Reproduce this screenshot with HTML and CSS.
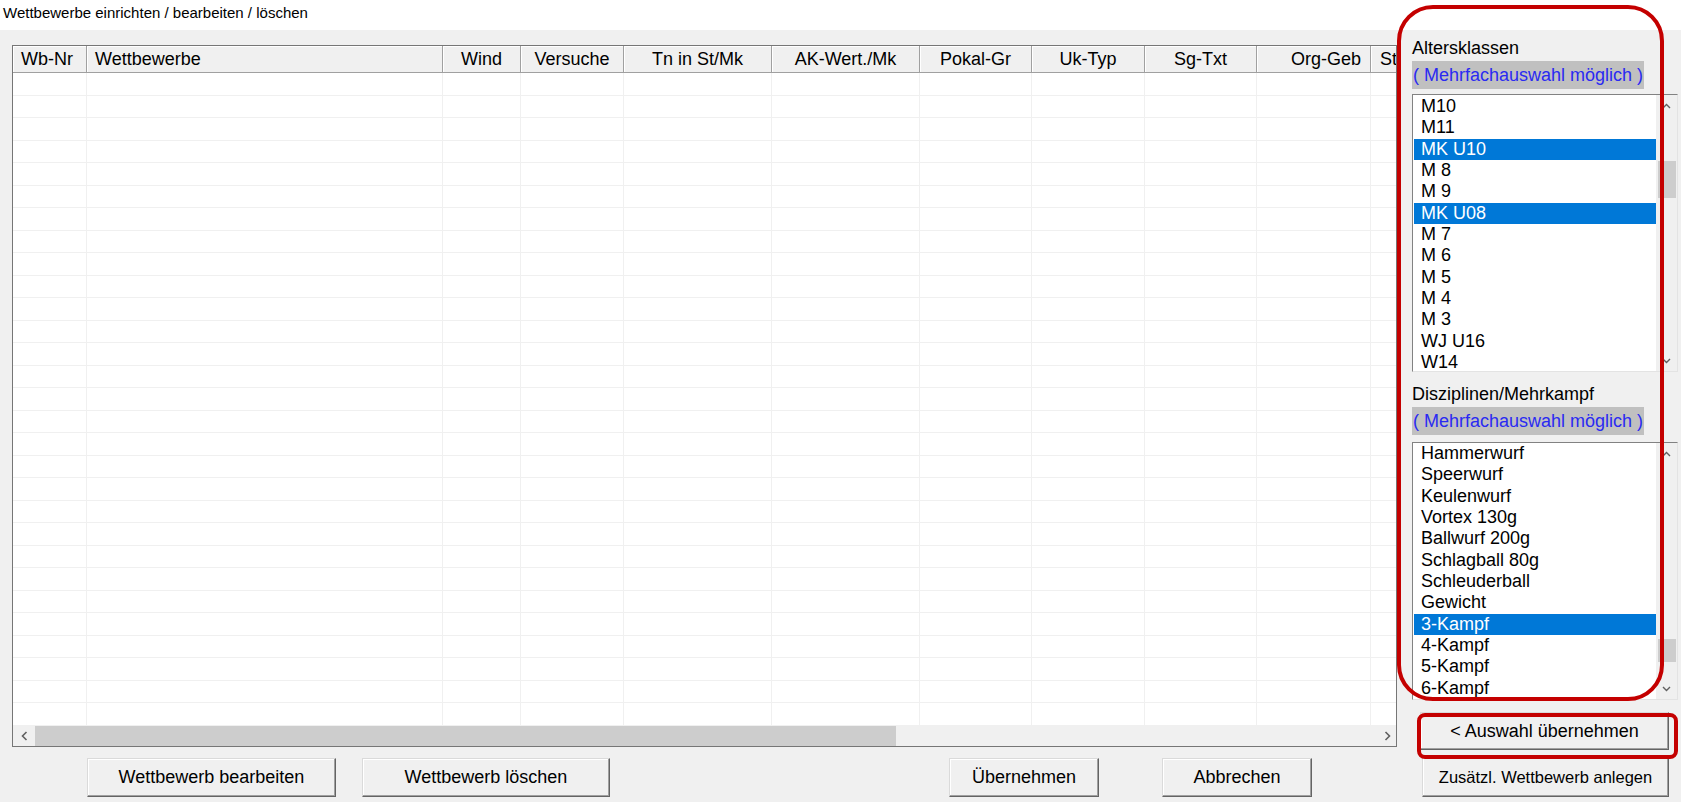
FILE: index.html
```html
<!DOCTYPE html>
<html lang="de">
<head>
    <meta charset="UTF-8">
    <title>Wettbewerbe einrichten / bearbeiten / löschen</title>
    <link rel="stylesheet" href="styles.css">
</head>
<body>
    <div class="title-bar">Wettbewerbe einrichten / bearbeiten / löschen</div>

    <div class="main">
        <div class="left-pane">
            <div class="grid-box">
                <div class="grid-view">
                    <div class="grid" id="grid">
                        <div class="hd l">Wb-Nr</div>
                        <div class="hd l">Wettbewerbe</div>
                        <div class="hd c">Wind</div>
                        <div class="hd c">Versuche</div>
                        <div class="hd c">Tn in St/Mk</div>
                        <div class="hd c">AK-Wert./Mk</div>
                        <div class="hd c">Pokal-Gr</div>
                        <div class="hd c">Uk-Typ</div>
                        <div class="hd c">Sg-Txt</div>
                        <div class="hd r">Org-Geb</div>
                        <div class="hd l st">St</div>
                        <!-- rows are added by the script below -->
                    </div>
                </div>
                <div class="hscroll">
                    <div class="arrow left-arrow">
                        <svg width="7" height="10" viewBox="0 0 7 10"><path d="M5.5 1 L1.5 5 L5.5 9" fill="none" stroke="#606060" stroke-width="1.6"/></svg>
                    </div>
                    <div class="track"><div class="thumb"></div></div>
                    <div class="arrow right-arrow">
                        <svg width="7" height="10" viewBox="0 0 7 10"><path d="M1.5 1 L5.5 5 L1.5 9" fill="none" stroke="#606060" stroke-width="1.6"/></svg>
                    </div>
                </div>
            </div>

            <div class="btn-row">
                <button class="btn btn-edit">Wettbewerb bearbeiten</button>
                <button class="btn btn-delete">Wettbewerb löschen</button>
                <button class="btn btn-ok">Übernehmen</button>
                <button class="btn btn-cancel">Abbrechen</button>
            </div>
        </div>

        <div class="side">
            <div class="mark"></div>

            <div class="side-label">Altersklassen</div>
            <div class="hint">( Mehrfachauswahl möglich )</div>
            <div class="listbox list-ak">
                <div class="items">
                    <div class="item">M10</div>
                    <div class="item">M11</div>
                    <div class="item sel">MK U10</div>
                    <div class="item">M 8</div>
                    <div class="item">M 9</div>
                    <div class="item sel">MK U08</div>
                    <div class="item">M 7</div>
                    <div class="item">M 6</div>
                    <div class="item">M 5</div>
                    <div class="item">M 4</div>
                    <div class="item">M 3</div>
                    <div class="item">WJ U16</div>
                    <div class="item">W14</div>
                </div>
                <div class="vscroll">
                    <div class="varrow"><svg width="9" height="6" viewBox="0 0 9 6"><path d="M1 5 L4.5 1.5 L8 5" fill="none" stroke="#606060" stroke-width="1.4"/></svg></div>
                    <div class="vtrack"><div class="vthumb"></div></div>
                    <div class="varrow"><svg width="9" height="6" viewBox="0 0 9 6"><path d="M1 1 L4.5 4.5 L8 1" fill="none" stroke="#606060" stroke-width="1.4"/></svg></div>
                </div>
            </div>

            <div class="side-label label-disc">Disziplinen/Mehrkampf</div>
            <div class="hint">( Mehrfachauswahl möglich )</div>
            <div class="listbox list-disc">
                <div class="items">
                    <div class="item">Hammerwurf</div>
                    <div class="item">Speerwurf</div>
                    <div class="item">Keulenwurf</div>
                    <div class="item">Vortex 130g</div>
                    <div class="item">Ballwurf 200g</div>
                    <div class="item">Schlagball 80g</div>
                    <div class="item">Schleuderball</div>
                    <div class="item">Gewicht</div>
                    <div class="item sel">3-Kampf</div>
                    <div class="item">4-Kampf</div>
                    <div class="item">5-Kampf</div>
                    <div class="item">6-Kampf</div>
                </div>
                <div class="vscroll">
                    <div class="varrow"><svg width="9" height="6" viewBox="0 0 9 6"><path d="M1 5 L4.5 1.5 L8 5" fill="none" stroke="#606060" stroke-width="1.4"/></svg></div>
                    <div class="vtrack"><div class="vthumb"></div></div>
                    <div class="varrow"><svg width="9" height="6" viewBox="0 0 9 6"><path d="M1 1 L4.5 4.5 L8 1" fill="none" stroke="#606060" stroke-width="1.4"/></svg></div>
                </div>
            </div>

            <button class="btn btn-pick">&lt; Auswahl übernehmen</button>
            <button class="btn btn-add">Zusätzl. Wettbewerb anlegen</button>
        </div>
    </div>

    <script>
        // empty rows of the grid
        const grid = document.getElementById('grid');
        for (let r = 0; r < 29; r++) {
            for (let c = 0; c < 11; c++) {
                const cell = document.createElement('div');
                cell.className = 'cell';
                grid.appendChild(cell);
            }
        }
    </script>
</body>
</html>
```

FILE: styles.css
```css
* {
    box-sizing: border-box;
}

body {
    margin: 0;
    width: 1681px;
    height: 802px;
    overflow: hidden;
    background-color: #f0f0f0;
    font-family: "Liberation Sans", Arial, sans-serif;
    color: #000;
}

.title-bar {
    height: 30px;
    background-color: #fff;
    padding: 3px 0 0 3px;
    font-size: 15px;
    line-height: 20px;
}

.main {
    display: flex;
    height: 772px;
}

/* left side: grid + buttons */
.left-pane {
    width: 1397px;
    padding: 15px 0 0 12px;
}

.grid-box {
    width: 1385px;
    border: 1px solid #767676;
    background-color: #fff;
}

.grid-view {
    height: 679.5px;
    overflow: hidden;
}

.grid {
    display: grid;
    grid-template-columns: 74px 356px 78px 103px 148px 148px 112px 113px 112px 114px 100px;
    grid-template-rows: 27px;
    grid-auto-rows: 22.5px;
    width: 1458px;
}

.hd {
    background-color: #f0f0f0;
    border-right: 1px solid #a0a0a0;
    border-bottom: 1px solid #a0a0a0;
    box-shadow: inset 1px 1px 0 #fff;
    font-size: 18px;
    line-height: 26px;
    white-space: nowrap;
    overflow: hidden;
}

.hd.l {
    padding-left: 8px;
}

.hd.c {
    text-align: center;
}

.hd.r {
    text-align: right;
    padding-right: 9px;
}

.hd.st {
    padding-left: 9px;
}

.cell {
    border-right: 1px solid #f0f0f0;
    border-bottom: 1px solid #f0f0f0;
}

.hscroll {
    display: flex;
    height: 20px;
    background-color: #f0f0f0;
}

.hscroll .arrow {
    display: flex;
    align-items: center;
    justify-content: center;
}

.left-arrow {
    width: 22px;
}

.right-arrow {
    width: 17px;
}

.hscroll .track {
    flex: 1;
}

.hscroll .thumb {
    width: 861px;
    height: 100%;
    background-color: #cdcdcd;
}

.btn-row {
    display: flex;
    margin-top: 11.5px;
}

.btn {
    height: 39px;
    background-color: #f0f0f0;
    border: 1px solid;
    border-color: #dadada #646464 #646464 #dadada;
    box-shadow: inset -1px -1px 0 #a0a0a0, inset 1px 1px 0 #fff;
    font-family: inherit;
    font-size: 18px;
    color: #000;
    padding: 0;
}

.btn-edit {
    width: 249px;
    margin-left: 75px;
}

.btn-delete {
    width: 248px;
    margin-left: 26px;
}

.btn-ok {
    width: 150px;
    margin-left: 339px;
}

.btn-cancel {
    width: 150px;
    margin-left: 63px;
}

/* right side: selection lists */
.side {
    position: relative;
    width: 284px;
    padding: 8px 0 0 15px;
}

.mark {
    position: absolute;
    left: 0;
    top: -25px;
    width: 267px;
    height: 696px;
    border: 4px solid #c40000;
    border-radius: 36px;
    pointer-events: none;
    z-index: 2;
}

.side-label {
    height: 21px;
    font-size: 18px;
    line-height: 21px;
}

.label-disc {
    margin-top: 12px;
}

.hint {
    display: inline-block;
    height: 28px;
    margin-top: 2px;
    padding: 0 1px;
    background-color: #c0c0c0;
    color: #2a2af2;
    font-size: 18px;
    line-height: 28px;
    white-space: nowrap;
}

.listbox {
    display: flex;
    width: 266px;
    margin-top: 5px;
    background-color: #fff;
    border: 1px solid;
    border-color: #828282 #e3e3e3 #e3e3e3 #828282;
}

.list-ak {
    height: 278px;
}

.list-disc {
    height: 258px;
    margin-top: 7px;
}

.items {
    flex: 1;
    overflow: hidden;
}

.list-ak .items {
    padding-top: 1px;
}

.item {
    height: 21.33px;
    line-height: 21.33px;
    padding-left: 8px;
    font-size: 18px;
    white-space: nowrap;
}

.item.sel {
    background-color: #0078d7;
    color: #fff;
    margin-left: 1px;
    padding-left: 7px;
}

.vscroll {
    width: 21px;
    display: flex;
    flex-direction: column;
    background-color: #f0f0f0;
}

.varrow {
    height: 21px;
    display: flex;
    align-items: center;
    justify-content: center;
}

.vtrack {
    flex: 1;
}

.vthumb {
    margin: 0 1px 0 2px;
    background-color: #cdcdcd;
}

.list-ak .vthumb {
    margin-top: 45px;
    height: 37px;
}

.list-disc .vthumb {
    margin-top: 175px;
    height: 23px;
}

.btn-pick {
    position: relative;
    display: block;
    width: 249px;
    height: 38px;
    margin: 12px 0 0 8px;
}

.btn-pick::after {
    content: "";
    position: absolute;
    left: -4px;
    top: 0;
    width: 253px;
    height: 38px;
    border: 4px solid #c40000;
    border-radius: 8px;
}

.btn-add {
    display: block;
    width: 247px;
    height: 40px;
    margin: 7px 0 0 10px;
    font-size: 16.5px;
}
```
